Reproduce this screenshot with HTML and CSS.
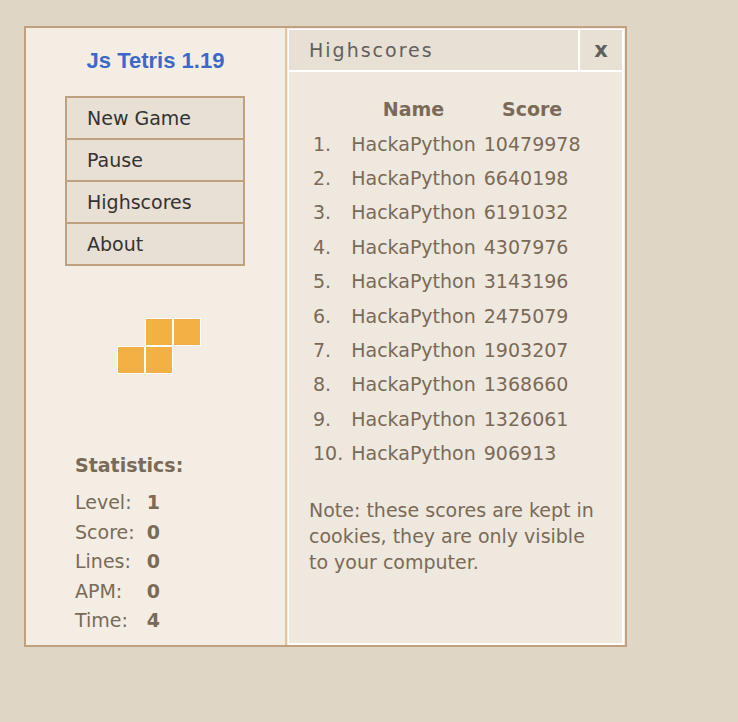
FILE: index.html
```html
<!DOCTYPE html>
<html>
<head>
<meta charset="utf-8">
<title>Js Tetris</title>
<link rel="stylesheet" href="styles.css">
</head>
<body>
<div class="game">
  <div class="left">
    <div class="title">Js Tetris 1.19</div>
    <div class="menu">
      <div class="item">New Game</div>
      <div class="item">Pause</div>
      <div class="item">Highscores</div>
      <div class="item">About</div>
    </div>
    <div class="piece">
      <div class="blank"></div><div class="cell"></div><div class="cell"></div>
      <div class="cell"></div><div class="cell"></div><div class="blank"></div>
    </div>
    <div class="stats-title">Statistics:</div>
    <div class="stats">
      <span class="lbl">Level:</span><span class="val">1</span>
      <span class="lbl">Score:</span><span class="val">0</span>
      <span class="lbl">Lines:</span><span class="val">0</span>
      <span class="lbl">APM:</span><span class="val">0</span>
      <span class="lbl">Time:</span><span class="val">4</span>
    </div>
  </div>
  <div class="right">
    <div class="window">
      <div class="wbar">
        <div class="wtitle">Highscores</div>
        <div class="wclose">x</div>
      </div>
      <div class="wbody">
        <table class="scores">
          <thead>
            <tr><th></th><th>Name</th><th>Score</th></tr>
          </thead>
          <tbody>
            <tr><td>1.</td><td>HackaPython</td><td>10479978</td></tr>
            <tr><td>2.</td><td>HackaPython</td><td>6640198</td></tr>
            <tr><td>3.</td><td>HackaPython</td><td>6191032</td></tr>
            <tr><td>4.</td><td>HackaPython</td><td>4307976</td></tr>
            <tr><td>5.</td><td>HackaPython</td><td>3143196</td></tr>
            <tr><td>6.</td><td>HackaPython</td><td>2475079</td></tr>
            <tr><td>7.</td><td>HackaPython</td><td>1903207</td></tr>
            <tr><td>8.</td><td>HackaPython</td><td>1368660</td></tr>
            <tr><td>9.</td><td>HackaPython</td><td>1326061</td></tr>
            <tr><td>10.</td><td>HackaPython</td><td>906913</td></tr>
          </tbody>
        </table>
        <p class="note">Note: these scores are kept in cookies, they are only visible to your computer.</p>
      </div>
    </div>
  </div>
</div>
</body>
</html>
```
FILE: styles.css
```css
html, body {
  margin: 0;
  padding: 0;
}
body {
  background: #e0d6c5;
  font-family: "DejaVu Sans", Verdana, sans-serif;
  font-size: 19px;
  color: #7a6a57;
  width: 738px;
  height: 722px;
  overflow: hidden;
}
.game {
  margin: 26px 0 0 24px;
  width: 599px;
  height: 617px;
  border: 2px solid #bfa07f;
  display: flex;
}
.left {
  width: 259px;
  background: #f4ede4;
  border-right: 2px solid #e2c49e;
  display: flex;
  flex-direction: column;
}
.title {
  margin-top: 20px;
  line-height: 26px;
  text-align: center;
  font-family: "Liberation Sans", Arial, sans-serif;
  font-weight: bold;
  font-size: 22px;
  color: #3b68c9;
}
.menu {
  margin: 22px 0 0 39px;
  width: 176px;
  border: 2px solid #bfa07f;
  background: #e8e0d4;
}
.item {
  height: 40px;
  line-height: 40px;
  padding-left: 20px;
  color: #333;
}
.item + .item {
  border-top: 2px solid #bfa07f;
}
.piece {
  margin: 52px 0 0 91px;
  display: grid;
  grid-template-columns: repeat(3, 28px);
  grid-template-rows: repeat(2, 28px);
}
.cell {
  background: #f3b045;
  border: 1px solid #fff;
}
.stats-title {
  margin: 76px 0 0 49px;
  line-height: 30px;
  font-weight: bold;
}
.stats {
  margin: 8px 0 0 49px;
  display: grid;
  grid-template-columns: auto auto;
  justify-content: start;
  column-gap: 12px;
  line-height: 29.5px;
}
.val {
  font-weight: bold;
}
.right {
  flex: 1;
  background: #f4ede4;
  padding: 1px 1px 0 1px;
  display: flex;
}
.window {
  flex: 1;
  border-style: solid;
  border-color: #fff;
  border-width: 1px 2px 2px 1px;
  background: #efe8df;
  display: flex;
  flex-direction: column;
}
.wbar {
  display: flex;
  height: 40px;
  border-bottom: 2px solid #fff;
  background: #e8e0d4;
}
.wtitle {
  flex: 1;
  padding-left: 20px;
  line-height: 40px;
  letter-spacing: 2px;
  color: #5f5f5f;
}
.wclose {
  width: 42px;
  border-left: 2px solid #fff;
  text-align: center;
  line-height: 40px;
  font-weight: bold;
  font-size: 21px;
  color: #5f5f5f;
}
.wbody {
  padding: 20px 20px 0 20px;
}
.scores {
  border-collapse: collapse;
}
.scores th, .scores td {
  padding: 0 4px;
  height: 34.4px;
  line-height: 26px;
  text-align: left;
}
.scores th {
  text-align: center;
  font-weight: bold;
}
.note {
  margin: 27px 0 0 0;
  line-height: 26px;
}
```
